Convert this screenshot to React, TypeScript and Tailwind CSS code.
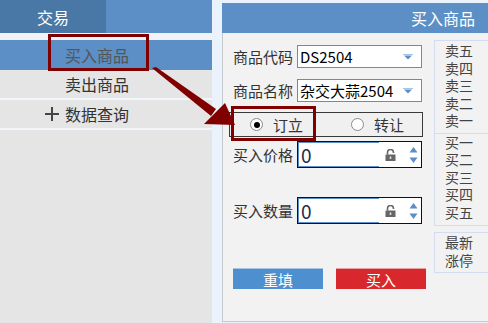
import React from 'react';

const font = { fontFamily: '"Noto Sans CJK SC", "Noto Sans", sans-serif' };

function Caret() {
  return (
    <svg width="10" height="6" viewBox="0 0 10 6">
      <path d="M0 0.5 H10" stroke="#a9c3e3" strokeWidth="1" />
      <path d="M1 1.5 H9 L5 5.5 Z" fill="#5b8fc6" />
    </svg>
  );
}

function Lock() {
  return (
    <svg width="11" height="12" viewBox="0 0 11 12">
      <path d="M2.5 5.5 V3.5 a3 3 0 0 1 6 0 V4" stroke="#666" strokeWidth="1.6" fill="none" />
      <rect x="0.5" y="5.5" width="10" height="6.5" fill="#666" />
      <rect x="4.7" y="7.5" width="1.6" height="2.5" fill="#ddd" />
    </svg>
  );
}

function Spin() {
  return (
    <svg width="9" height="18" viewBox="0 0 9 18">
      <path d="M4.5 1 L8.5 6.5 H0.5 Z" fill="#5b8fc6" />
      <path d="M0.5 11.5 H8.5 L4.5 17 Z" fill="#5b8fc6" />
    </svg>
  );
}

function Select({ value }: { value: string }) {
  return (
    <div className="w-[125px] shrink-0 h-[23px] bg-white border border-[#5b8fc6] flex items-center justify-between pl-[2px] pr-[8px]">
      <span className="text-[15px] leading-none text-black">{value}</span>
      <Caret />
    </div>
  );
}

function NumberInput() {
  return (
    <div className="w-[125px] shrink-0 h-[27px] bg-white border border-[#111] flex items-center">
      <div className="w-[81px] h-full border-y border-l border-[#5b8fc6] flex items-center pl-[2px]">
        <span className="text-[19px] leading-none text-[#1d2c4f]">0</span>
      </div>
      <div className="ml-[6px]">
        <Lock />
      </div>
      <div className="ml-[13px]">
        <Spin />
      </div>
    </div>
  );
}

function Radio({ checked }: { checked?: boolean }) {
  return (
    <span className="w-[13px] h-[13px] rounded-full bg-white border border-[#8a8a8a] flex items-center justify-center">
      {checked && <span className="w-[6px] h-[6px] rounded-full bg-black" />}
    </span>
  );
}

const asks = ['卖五', '卖四', '卖三', '卖二', '卖一'];
const bids = ['买一', '买二', '买三', '买四', '买五'];

export default function App() {
  return (
    <div className="relative w-[488px] h-[323px] overflow-hidden bg-[#eaf2fb] flex" style={font}>
      {/* left menu */}
      <div className="w-[212px] shrink-0 h-full bg-[#e5e5e5] flex flex-col">
        <div className="h-[33px] bg-[#5b8fc6] flex">
          <div className="w-[106px] h-full bg-[#4a78a6] flex items-center justify-center text-white text-[16px] leading-none">
            交易
          </div>
        </div>
        <div className="h-[7px] bg-[#f0f2f5]" />
        <div className="h-[30px] bg-[#5b8fc6] flex items-center pl-[65px] text-[16px] leading-none text-[#555]">
          买入商品
        </div>
        <div className="h-[30px] border-b-2 border-[#f2f5fa] flex items-center pl-[65px] text-[16px] leading-none text-[#333]">
          卖出商品
        </div>
        <div className="h-[30px] border-b-2 border-[#f2f5fa] flex items-center pl-[44px] text-[16px] leading-none text-[#333]">
          <svg width="16" height="16" viewBox="0 0 16 16" className="mr-[5px]">
            <path d="M8 1 V15 M1 8 H15" stroke="#444" strokeWidth="2" />
          </svg>
          数据查询
        </div>
      </div>

      {/* right panel */}
      <div className="ml-[10px] w-[280px] shrink-0 pt-[3px] flex flex-col h-[322px]">
        <div className="h-[30px] w-[266px] bg-[#5b8fc6] flex items-center justify-end pr-[13px] text-white text-[16px] leading-none">
          买入商品
        </div>
        <div className="flex-1 bg-[#f2f2f2] border-l border-b border-[#c6c9ce] flex pl-[10px]">
          <div className="w-[201px] shrink-0 flex flex-col pt-[12px] text-[15px] text-[#333]">
            <div className="flex items-center h-[23px]">
              <span className="w-[64px] shrink-0 leading-none">商品代码</span>
              <Select value="DS2504" />
            </div>
            <div className="flex items-center h-[23px] mt-[11px]">
              <span className="w-[64px] shrink-0 leading-none">商品名称</span>
              <Select value="杂交大蒜2504" />
            </div>
            <div className="mt-[10px] -ml-[4px] w-[194px] h-[25px] bg-[#f0f0f0] border border-[#3a3a3a] flex items-center text-[15px] leading-none text-[#333]">
              <span className="ml-[20px]"><Radio checked /></span>
              <span className="ml-[10px]">订立</span>
              <span className="ml-[48px]"><Radio /></span>
              <span className="ml-[10px]">转让</span>
            </div>
            <div className="flex items-center h-[27px] mt-[4px]">
              <span className="w-[64px] shrink-0 leading-none">买入价格</span>
              <NumberInput />
            </div>
            <div className="flex items-center h-[27px] mt-[29px]">
              <span className="w-[64px] shrink-0 leading-none">买入数量</span>
              <NumberInput />
            </div>
            <div className="flex mt-[44px] gap-[13px]">
              <div className="w-[90px] h-[21px] bg-[#4e8fd0] border-t border-[#a9c3e3] text-white text-[15px] leading-none flex items-center justify-center">
                重填
              </div>
              <div className="w-[90px] h-[21px] bg-[#d9282d] border-t border-[#e8a0a2] text-white text-[15px] leading-none flex items-center justify-center">
                买入
              </div>
            </div>
          </div>

          <div className="w-[60px] shrink-0 pt-[7px] flex flex-col text-[14px] text-[#444]">
            <div className="border border-[#d2def0] pl-[10px] pt-[1px] pb-[3px] leading-[17.5px]">
              {asks.map((a) => (
                <div key={a}>{a}</div>
              ))}
            </div>
            <div className="border border-t-0 border-[#d2def0] pl-[10px] pt-0 pb-[4px] leading-[17.5px]">
              {bids.map((b) => (
                <div key={b}>{b}</div>
              ))}
            </div>
            <div className="mt-[6px] border border-[#d2def0] pl-[10px] pt-[0px] pb-[3px] leading-[18px]">
              <div>最新</div>
              <div>涨停</div>
            </div>
          </div>
        </div>
      </div>

      {/* annotations */}
      <div className="absolute left-[48px] top-[34px] w-[101px] h-[37px] border-[3px] border-[#800000]" />
      <div className="absolute left-[231px] top-[106px] w-[85px] h-[35px] border-[3px] border-[#800000]" />
      <svg className="absolute left-0 top-0 pointer-events-none" width="488" height="323" viewBox="0 0 488 323">
        <polygon points="152,68 156,67 216,109 211,116" fill="#800000" />
        <polygon points="204,124 225,103 235,125" fill="#800000" />
      </svg>
    </div>
  );
}
